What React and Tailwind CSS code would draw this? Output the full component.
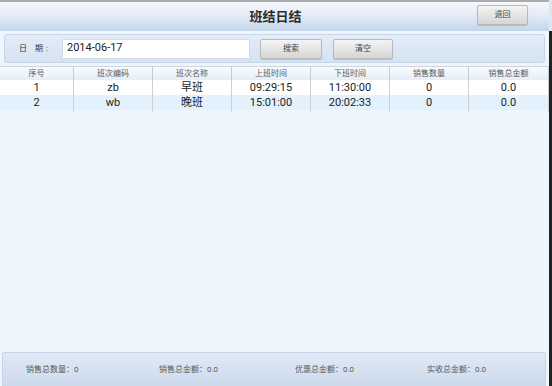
export default function App() {
  const font = { fontFamily: 'Roboto, "Noto Sans CJK SC", sans-serif' };
  const cols = ["序号", "班次编码", "班次名称", "上班时间", "下班时间", "销售数量", "销售总金额"];
  const rows = [
    ["1", "zb", "早班", "09:29:15", "11:30:00", "0", "0.0"],
    ["2", "wb", "晚班", "15:01:00", "20:02:33", "0", "0.0"],
  ];
  const btn =
    "flex items-center justify-center border border-[#b9b9b9] bg-gradient-to-b from-[#f4f4f4] to-[#d6d6d6] text-[8px] text-[#444] rounded-[2px] shadow-[0_1px_1px_rgba(0,0,0,0.15)]";
  return (
    <div className="w-[552px] h-[386px] flex bg-[#eef5fd] overflow-hidden" style={font}>
      <div className="flex-1 flex flex-col">
        <div className="h-[2px] bg-[#a9acb0]" />
        <div className="h-[29px] flex items-center relative bg-gradient-to-b from-[#f6f8fb] via-[#e2eaf5] to-[#c4d5eb]">
          <div className="flex-1 text-center font-bold text-[13px] text-[#2b2b2b] pl-[2px]">班结日结</div>
          <div className={`absolute right-[21px] top-[3px] w-[51px] h-[20px] ${btn}`}>退回</div>
        </div>
        <div className="mx-[4px] mt-[3px] h-[29px] flex items-center rounded-[3px] border border-[#c6d5e8] bg-gradient-to-b from-[#e3ecf7] to-[#d6e3f2]">
          <div className="w-[57px] pl-[14px] text-[8px] text-[#333] tracking-[3px]">日 期:</div>
          <div className="w-[188px] h-[20px] bg-white border border-[#d2dbe6] flex items-center pl-[4px] text-[11px] text-[#222]">2014-06-17</div>
          <div className={`ml-[10px] w-[62px] h-[20px] ${btn}`}>搜索</div>
          <div className={`ml-[11px] w-[60px] h-[20px] ${btn}`}>清空</div>
        </div>
        <div className="mt-[3px] grid grid-cols-[74px_79px_79px_79px_79px_79px_1fr] h-[14px] bg-gradient-to-b from-[#fafcfe] to-[#e6edf6] border-t border-[#cdd6e0]">
          {cols.map((c, i) => (
            <div key={i} className="flex items-center justify-center text-[8px] text-[#5a5a5a] border-r border-[#c5ccd5]">
              {c}
            </div>
          ))}
        </div>
        {rows.map((r, ri) => (
          <div
            key={ri}
            className={`grid grid-cols-[74px_79px_79px_79px_79px_79px_1fr] h-[15px] ${ri === 0 ? "bg-white" : "bg-[#e2f1fb]"}`}
          >
            {r.map((v, i) => (
              <div key={i} className="flex items-center justify-center text-[11px] text-[#222] border-r border-[#c9d0d8]">
                {v}
              </div>
            ))}
          </div>
        ))}
        <div className="flex-1" />
        <div className="h-[34px] ml-[2px] mr-[3px] flex items-center rounded-t-[3px] border border-b-0 border-[#c4d3e6] bg-gradient-to-b from-[#e2eaf5] to-[#cbdaec] text-[8px] text-[#5a5a5a]">
          <div className="w-[131px] pl-[23px]">销售总数量：0</div>
          <div className="w-[134px] pl-[25px]">销售总金额：0.0</div>
          <div className="w-[132px] pl-[27px]">优惠总金额：0.0</div>
          <div className="flex-1 pl-[27px]">实收总金额：0.0</div>
        </div>
      </div>
      <div className="w-[3px] flex flex-col">
        <div className="h-[31px] bg-[#dfe6ef]" />
        <div className="flex-1 bg-[#222]" />
      </div>
    </div>
  );
}
